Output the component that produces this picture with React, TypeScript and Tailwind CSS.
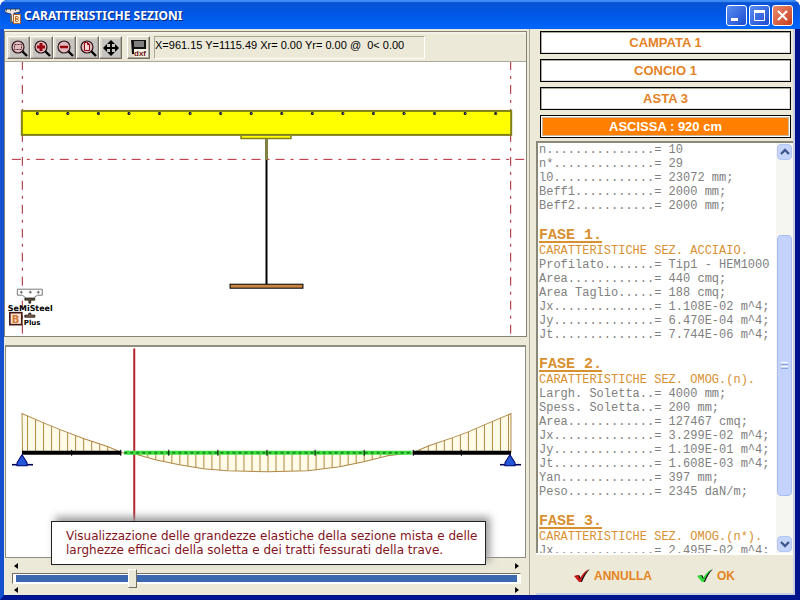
import React, { useState } from 'react';

type Point = [number, number];

interface Section {
  title?: string;
  subtitle?: string;
  rows: [string, string][];
}

const sections: Section[] = [
  {
    rows: [
      ['n', '10'],
      ['n*', '29'],
      ['l0', '23072 mm;'],
      ['Beff1', '2000 mm;'],
      ['Beff2', '2000 mm;']
    ]
  },
  {
    title: 'FASE 1.',
    subtitle: 'CARATTERISTICHE SEZ. ACCIAIO.',
    rows: [
      ['Profilato', 'Tip1 - HEM1000'],
      ['Area', '440 cmq;'],
      ['Area Taglio', '188 cmq;'],
      ['Jx', '1.108E-02 m^4;'],
      ['Jy', '6.470E-04 m^4;'],
      ['Jt', '7.744E-06 m^4;']
    ]
  },
  {
    title: 'FASE 2.',
    subtitle: 'CARATTERISTICHE SEZ. OMOG.(n).',
    rows: [
      ['Largh. Soletta', '4000 mm;'],
      ['Spess. Soletta', '200 mm;'],
      ['Area', '127467 cmq;'],
      ['Jx', '3.299E-02 m^4;'],
      ['Jy', '1.109E-01 m^4;'],
      ['Jt', '1.608E-03 m^4;'],
      ['Yan', '397 mm;'],
      ['Peso', '2345 daN/m;']
    ]
  },
  {
    title: 'FASE 3.',
    subtitle: 'CARATTERISTICHE SEZ. OMOG.(n*).',
    rows: [['Jx', '2.495E-02 m^4;']]
  }
];

// Bending moment along the beam, y = 105 is the beam axis
const moment: Point[] = [
  [15, 66], [36, 75], [53, 82], [77, 91], [101, 99], [115, 105],
  [127, 106], [148, 112], [172, 117], [196, 121], [220, 123], [260, 124],
  [300, 123], [332, 119], [356, 114], [380, 108], [405, 105],
  [421, 98], [445, 90], [461, 84], [477, 77], [503, 66]
];

const momentAt = (x: number) => {
  for (let i = 1; i < moment.length; i++) {
    const [x0, y0] = moment[i - 1];
    const [x1, y1] = moment[i];
    if (x <= x1) return y0 + ((x - x0) / (x1 - x0)) * (y1 - y0);
  }
  return 105;
};

const hatch = Array.from({ length: 61 }, (_, i) => 20.5 + i * 8);
const rebars = Array.from({ length: 16 }, (_, i) => 31.5 + i * 30.6);
const ticks = [64, 113, 161, 210, 259, 307, 356, 405, 453];

const Lens = ({ children }: { children: React.ReactNode }) => (
  <svg viewBox="0 0 18 18" className="h-[18px] w-[18px]">
    <rect width="18" height="18" fill="#c6c3c0" />
    <path d="M12 12l5 5" stroke="#000" strokeWidth="2.4" />
    <circle cx="8" cy="8" r="6" fill="#e2b9bd" stroke="#2a1418" strokeWidth="1.2" />
    {children}
  </svg>
);

const toolIcons = [
  {
    label: 'Zoom finestra',
    icon: (
      <Lens>
        <rect x="4.5" y="5.5" width="7" height="5" fill="none" stroke="#4a3038" strokeDasharray="2 1" />
      </Lens>
    )
  },
  {
    label: 'Zoom avanti',
    icon: (
      <Lens>
        <path d="M8 4v8M4 8h8" stroke="#9c0010" strokeWidth="3" />
      </Lens>
    )
  },
  {
    label: 'Zoom indietro',
    icon: (
      <Lens>
        <path d="M4 8h8" stroke="#9c0010" strokeWidth="2.6" />
      </Lens>
    )
  },
  {
    label: 'Zoom pagina',
    icon: (
      <Lens>
        <path d="M5.5 3.5h3l2 2v6h-5zM8.5 3.5v2h2" fill="#f2d6d8" stroke="#9c0010" />
      </Lens>
    )
  },
  {
    label: 'Sposta',
    icon: (
      <svg viewBox="0 0 18 18" className="h-[18px] w-[18px]">
        <rect width="18" height="18" fill="#c6c3c0" />
        <path d="M9 3v12M3 9h12" stroke="#000" strokeWidth="2" />
        <path d="M9 1l4 4H5zM9 17l4-4H5zM1 9l4-4v8zM17 9l-4-4v8z" />
      </svg>
    )
  }
];

const toolButton =
  'flex h-[23px] w-[23px] items-center justify-center border border-t-white border-l-white border-r-[#716f64] border-b-[#716f64] bg-[#dedacb] shadow-[inset_-1px_-1px_#aca899]';

const BeamMark = () => (
  <svg viewBox="0 0 16 16" className="h-4 w-4">
    <path d="M0 1h15v3l-4 1H9v9H7l-1-1V6L2 5 0 4z" fill="#e8e4dc" stroke="#1c2c50" strokeWidth="0.8" />
    <path d="M1 2h1M5 2h1M10 2h1" stroke="#000" />
    <path d="M5 6l2 2v7H5" fill="#666" />
    <rect x="8.5" y="6.5" width="7" height="9" fill="#fff1dc" stroke="#b0622c" />
    <path d="M10.5 8.5v5h2l1-1-1-1.500h-2h2l1-1-1-1.500z" fill="none" stroke="#c06820" />
  </svg>
);

const SectionDrawing = () => (
  <svg viewBox="0 0 520 274" className="block h-full w-full">
    <g fill="none" stroke="#a8202e" strokeDasharray="9 6 3 6">
      <path d="M16.500 -1V272" />
      <path d="M505.500 -1V272" />
      <path d="M6 97.500H520" stroke="#b82838" />
    </g>
    <rect x="16" y="49" width="490" height="24" fill="#ff0" stroke="#808018" strokeWidth="2" />
    {rebars.map((x) => (
      <g key={x}>
        <circle cx={x} cy="51.500" r="1.500" fill="#101030" />
        <rect x={x} y="51" width="1" height="1" fill="#88a" />
      </g>
    ))}
    <path d="M235.500 74v2.500h50V74" fill="#ff0" stroke="#808018" strokeWidth="1.500" />
    <path d="M261 76v22" stroke="#808040" strokeWidth="3" />
    <path d="M261 98v125" stroke="#000" strokeWidth="2" />
    <rect x="224.500" y="222.500" width="73" height="4" fill="#cb8542" stroke="#000" />

    {/* SeMiSteel mark */}
    <g fontFamily="DejaVu Sans, sans-serif" fontWeight="bold">
      <path d="M11.500 227.500h25v6h-5l-4 3h-7l-4-3h-5z" fill="#fff" stroke="#777" />
      <path d="M14 230.500h3M15.500 229v3M23 230.500h3M24.500 229v3M31 230.500h3M32.500 229v3" stroke="#666" />
      <path d="M19 236.500h10v2h-4v3h-2v-3h-4z" fill="#5c4c38" stroke="#000" strokeWidth="0.6" />
      <path d="M19 255.500v-2h4v-2h2v2h4v2z" fill="#9a6c50" stroke="#000" strokeWidth="0.8" />
      <text x="2" y="249" fontSize="8">SeMiSteel</text>
      <rect x="4" y="251" width="12" height="12" fill="#fbe3cf" stroke="#421512" strokeWidth="1.600" />
      <text x="6" y="261" fontSize="10" fill="#d07838">B</text>
      <text x="18" y="263" fontSize="7">Plus</text>
    </g>
  </svg>
);

const Support = ({ x }: { x: number }) => (
  <g>
    <path d={`M${x - 10} 117h21`} stroke="#00005c" strokeWidth="1.600" />
    <path d={`M${x} 107l5 8v3h-10v-3z`} fill="#2458d8" stroke="#000070" />
  </g>
);

const MomentDiagram = () => (
  <svg viewBox="-1 0 518 209" className="block h-full w-full">
    <polygon points={`15,105 ${moment.map((p) => p.join(',')).join(' ')} 503,105`} fill="#fffbe6" />
    <g stroke="#b08848" fill="none">
      {hatch.map((x) => (
        <path key={x} d={`M${x} 105V${momentAt(x)}`} />
      ))}
      <polyline points={`15.500,105 ${moment.map((p) => p.join(',')).join(' ')} 503,105`} />
    </g>
    <path d="M127 1v173" stroke="#b3242e" strokeWidth="2" />
    <path d="M15 105h99M405 105h98" stroke="#000" strokeWidth="4" />
    <path d="M117 105h287" stroke="#3fe03f" strokeWidth="4" />
    <path d="M117 105h287" stroke="#168c20" strokeWidth="2" strokeDasharray="3 3" />
    {ticks.map((x) => (
      <path key={x} d={`M${x + 0.5} 102v6`} stroke="#000" />
    ))}
    <Support x={15} />
    <Support x={502} />
  </svg>
);

const CheckMark = ({ color }: { color: string }) => (
  <svg viewBox="0 0 16 14" className="h-[14px] w-4">
    <path d="M1 7l4-1 2 3c2-4 5-7 9-9-4 4-6 8-8 13H6z" fill="#111" />
    <path d="M0 7l4-1 2 4c2-5 5-8 9-10-4 4-7 8-8 13H5z" fill={color} />
  </svg>
);

const panelBox =
  'flex h-[23px] items-center justify-center border border-black text-[13px] font-bold leading-none';
const scrollButton =
  'flex h-4 w-[15px] items-center justify-center rounded-sm border border-[#b3c5f0] bg-[#c6d5fb]';
const windowButton =
  'flex h-[21px] w-[21px] items-center justify-center rounded-[3px] border border-white';

const App = () => {
  const [ascissa, setAscissa] = useState(920);

  return (
    <div
      className="flex h-screen flex-col overflow-hidden rounded-t-lg bg-[#0831c8] text-black"
      style={{ fontFamily: '"Liberation Sans", Arial, sans-serif' }}
    >
      {/* Title bar */}
      <header className="flex h-[29px] shrink-0 items-center gap-[3px] bg-linear-to-b from-[#0b52d0] via-[#0057e6] to-[#0066fb] pt-[2px] pr-[7px] pl-[5px] shadow-[inset_0_2px_1px_#3f8df5]">
        <BeamMark />
        <h1
          className="flex-1 text-[12px] font-bold text-white"
          style={{ fontFamily: '"Noto Sans", sans-serif', textShadow: '1px 1px #0a2a80' }}
        >
          CARATTERISTICHE SEZIONI
        </h1>
        <div className="flex gap-[2px]">
          <button aria-label="Riduci" className={`${windowButton} bg-linear-to-br from-[#5c8cf0] to-[#1c4ad0]`}>
            <svg viewBox="0 0 19 19" className="h-[19px] w-[19px]">
              <path d="M4 13.500h7" stroke="#fff" strokeWidth="3" />
            </svg>
          </button>
          <button aria-label="Ingrandisci" className={`${windowButton} bg-linear-to-br from-[#5c8cf0] to-[#1c4ad0]`}>
            <svg viewBox="0 0 19 19" className="h-[19px] w-[19px]">
              <path d="M4.500 5.500h10v9h-10z" fill="none" stroke="#fff" />
              <path d="M4 5.500h11" stroke="#fff" strokeWidth="3" />
            </svg>
          </button>
          <button aria-label="Chiudi" className={`${windowButton} bg-linear-to-br from-[#e88a6c] to-[#c83c18]`}>
            <svg viewBox="0 0 19 19" className="h-[19px] w-[19px]">
              <path d="M5 5l9 9M14 5l-9 9" stroke="#fff" strokeWidth="2" />
            </svg>
          </button>
        </div>
      </header>

      <div className="flex min-h-0 flex-1 border-r-[5px] border-b-[5px] border-l-4 border-r-[#00138c] border-b-[#00148f] border-l-[#1450d0]">
        {/* Left column: drawings */}
        <main className="relative flex min-w-0 flex-1 flex-col border-r border-[#aca899] bg-[#ece9d8] pt-[2px]">
          <section className="mr-[2px] flex min-h-0 flex-[306] flex-col border border-[#858474]">
            <div className="flex h-[30px] shrink-0 items-center border-t-2 border-b border-t-[#f4f2e8] border-b-[#aca899] pl-[2px]">
              {toolIcons.map((tool) => (
                <button key={tool.label} aria-label={tool.label} className={toolButton}>
                  {tool.icon}
                </button>
              ))}
              <button aria-label="Esporta dxf" className={`${toolButton} ml-[5px]`}>
                <svg viewBox="0 0 18 18" className="h-[18px] w-[18px]">
                  <path d="M1 1h15v9H6v5H2z" fill="#111" />
                  <path d="M4 2h10v6H4z" fill="#808080" />
                  <rect x="4" y="10" width="14" height="8" fill="#f4f0e4" />
                  <text x="4" y="17" fontSize="8" fontWeight="bold" fill="#6e1818">dxf</text>
                </svg>
              </button>
              <output className="ml-1 h-[23px] w-[271px] border border-t-[#aca899] border-r-white border-b-white border-l-[#aca899] text-[11px] leading-[16px] whitespace-pre">
                X=961.15 Y=1115.49 Xr= 0.00 Yr= 0.00 @  0&lt; 0.00
              </output>
            </div>
            <div className="min-h-0 flex-1 bg-white">
              <SectionDrawing />
            </div>
          </section>

          <section className="mt-2 mr-[3px] ml-[1px] min-h-0 flex-[212] border border-t-2 border-[#8f8d7c] bg-white">
            <MomentDiagram />
          </section>

          <section className="flex h-[37px] shrink-0 flex-col justify-between px-[8px] pt-[5px] pb-[2px]">
            <div className="flex justify-between px-[2px]">
              <svg viewBox="0 0 4 6" className="h-[6px] w-1"><path d="M4 0v6L0 3z" /></svg>
              <svg viewBox="0 0 4 6" className="h-[6px] w-1"><path d="M0 0v6l4-3z" /></svg>
            </div>
            <input
              type="range"
              aria-label="Ascissa"
              min={0}
              max={4000}
              step={10}
              value={ascissa}
              onChange={(e) => setAscissa(Number(e.target.value))}
              className="h-[11px] w-full appearance-none border border-t-[#716f64] border-r-white border-b-white border-l-[#716f64] bg-[#3c68b0] shadow-[inset_3px_0_#fff,inset_-3px_0_#fff,inset_0_1px_#fff,inset_0_-1px_#fff] [&::-webkit-slider-thumb]:h-[19px] [&::-webkit-slider-thumb]:w-[9px] [&::-webkit-slider-thumb]:appearance-none [&::-webkit-slider-thumb]:border [&::-webkit-slider-thumb]:border-t-white [&::-webkit-slider-thumb]:border-r-[#716f64] [&::-webkit-slider-thumb]:border-b-[#716f64] [&::-webkit-slider-thumb]:border-l-white [&::-webkit-slider-thumb]:bg-[#ece9d8]"
            />
            <div className="flex justify-between px-[2px]">
              <svg viewBox="0 0 4 6" className="h-[6px] w-1"><path d="M4 0v6L0 3z" /></svg>
              <svg viewBox="0 0 4 6" className="h-[6px] w-1"><path d="M0 0v6l4-3z" /></svg>
            </div>
          </section>

          {/* Note over the diagram */}
          <p
            className="absolute bottom-[30px] left-[47px] border border-[#222] bg-white py-[7px] pr-2 pl-[14px] text-[12px] leading-[14px] whitespace-nowrap text-[#84141c] shadow-[4px_-4px_8px_#999]"
            style={{ fontFamily: '"DejaVu Sans", Verdana, sans-serif' }}
          >
            Visualizzazione delle grandezze elastiche della sezione mista e delle
            <br />
            larghezze efficaci della soletta e dei tratti fessurati della trave.
          </p>
        </main>

        {/* Right column: section data */}
        <aside className="flex w-[265px] shrink-0 flex-col border-r-2 border-[#c9cfe0] bg-[#ece9d8] pt-[2px] pl-[6px]">
          <div className="flex flex-col gap-[5px] pr-[2px] pl-1 text-[#e58226]">
            <button className={`${panelBox} bg-white shadow-[inset_1px_1px_#aca899,inset_-1px_-1px_#ddd]`}>CAMPATA 1</button>
            <button className={`${panelBox} bg-white shadow-[inset_1px_1px_#aca899,inset_-1px_-1px_#ddd]`}>CONCIO 1</button>
            <button className={`${panelBox} bg-white shadow-[inset_1px_1px_#aca899,inset_-1px_-1px_#ddd]`}>ASTA 3</button>
            <output className={`${panelBox} bg-[#ff8000] text-white shadow-[inset_0_0_0_1px_#fff,inset_0_0_0_2px_#c8b8a0]`}>
              ASCISSA : {ascissa} cm
            </output>
          </div>

          <div className="mt-[3px] flex min-h-0 flex-1 border-t-2 border-l-2 border-[#8a8878] bg-white">
            <div
              className="min-w-0 flex-1 overflow-hidden pl-[1px] text-[12px] leading-[14px] whitespace-pre text-[#808080]"
              style={{ fontFamily: '"Liberation Mono", "Courier New", monospace' }}
            >
              {sections.map((section, i) => (
                <div key={i} className="mb-[14px]">
                  {section.title && (
                    <h2 className="text-[15px] leading-[17px] font-bold text-[#d89030] underline decoration-2 underline-offset-2">
                      {section.title}
                    </h2>
                  )}
                  {section.subtitle && <h3 className="text-[#d89030]">{section.subtitle}</h3>}
                  {section.rows.map(([name, value]) => (
                    <p key={name}>{`${name.padEnd(16, '.')}= ${value}`}</p>
                  ))}
                </div>
              ))}
            </div>
            <div className="flex w-[17px] shrink-0 flex-col items-center bg-[#f5f5f2] py-[1px]">
              <button aria-label="Scorri su" className={scrollButton}>
                <svg viewBox="0 0 10 8" className="h-2 w-[10px]">
                  <path d="M1 6l4-4 4 4" fill="none" stroke="#40588c" strokeWidth="2.400" />
                </svg>
              </button>
              <div className="flex-[76]" />
              <div className="flex w-[15px] flex-[262] flex-col items-center justify-center gap-[1px] rounded-sm border border-[#a8bcf0] bg-[#c3d3fd]">
                <span className="h-px w-[7px] bg-white" />
                <span className="h-px w-[7px] bg-[#8ca6e0]" />
                <span className="h-px w-[7px] bg-white" />
                <span className="h-px w-[7px] bg-[#8ca6e0]" />
              </div>
              <div className="flex-[40]" />
              <button aria-label="Scorri giù" className={scrollButton}>
                <svg viewBox="0 0 10 8" className="h-2 w-[10px]">
                  <path d="M1 2l4 4 4-4" fill="none" stroke="#40588c" strokeWidth="2.400" />
                </svg>
              </button>
            </div>
          </div>

          <div className="flex h-[42px] shrink-0 items-center border-t-2 border-b-2 border-t-white border-b-[#c9cfe0] pt-1 pl-[38px] text-[12px] font-bold text-[#e58420]">
            <button className="flex items-center gap-1">
              <CheckMark color="#c81818" />
              ANNULLA
            </button>
            <button className="ml-[45px] flex items-center gap-1">
              <CheckMark color="#30d838" />
              OK
            </button>
          </div>
        </aside>
      </div>
    </div>
  );
};

export default App;
